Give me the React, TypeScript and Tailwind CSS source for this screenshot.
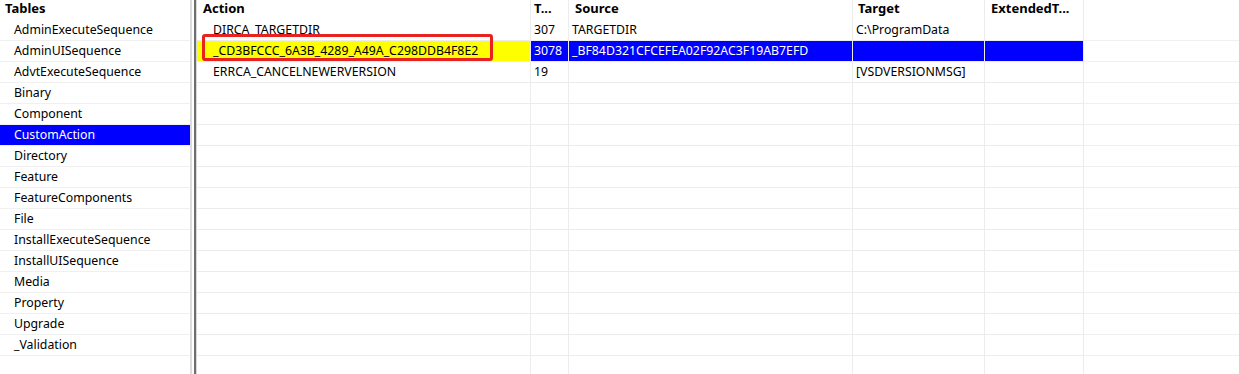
import React from "react";

const tables = [
  "AdminExecuteSequence",
  "AdminUISequence",
  "AdvtExecuteSequence",
  "Binary",
  "Component",
  "CustomAction",
  "Directory",
  "Feature",
  "FeatureComponents",
  "File",
  "InstallExecuteSequence",
  "InstallUISequence",
  "Media",
  "Property",
  "Upgrade",
  "_Validation"
];

interface Row {
  action: string;
  type: string;
  source: string;
  target: string;
  ext: string;
}

const rows: Row[] = [
  { action: "DIRCA_TARGETDIR", type: "307", source: "TARGETDIR", target: "C:\\ProgramData", ext: "" },
  {
    action: "_CD3BFCCC_6A3B_4289_A49A_C298DDB4F8E2",
    type: "3078",
    source: "_BF84D321CFCEFEA02F92AC3F19AB7EFD",
    target: "",
    ext: ""
  },
  { action: "ERRCA_CANCELNEWERVERSION", type: "19", source: "", target: "[VSDVERSIONMSG]", ext: "" }
];

const emptyRows = 13;

function TablesPanel() {
  return (
    <div className="flex w-[192px] shrink-0 flex-col border-r-2 border-[#dcdcdc]">
      <div className="h-[20px] pl-[5px] text-[13px] font-bold leading-[17px]">Tables</div>
      {tables.map((t) => {
        const selected = t === "CustomAction";
        return (
          <div
            key={t}
            className={
              selected
                ? "h-[21px] border-b border-[#f0f0f0] bg-[#0000ff] pl-[14px] leading-[20px] text-white"
                : "h-[21px] border-b border-[#f0f0f0] pl-[14px] leading-[20px]"
            }
          >
            {t}
          </div>
        );
      })}
    </div>
  );
}

function ActionTable() {
  return (
    <div className="flex min-w-0 flex-1 flex-col">
      {/* header */}
      <div className="flex h-[20px] text-[13px] font-bold leading-[17px]">
        <div className="w-[334px] shrink-0 border-r border-[#ececec] pl-[6px]">Action</div>
        <div className="w-[38px] shrink-0 border-r border-[#ececec] pl-[3px]">T...</div>
        <div className="w-[284px] shrink-0 border-r border-[#ececec] pl-[6px]">Source</div>
        <div className="w-[132px] shrink-0 border-r border-[#ececec] pl-[5px]">Target</div>
        <div className="w-[99px] shrink-0 border-r border-[#ececec] pl-[6px]">ExtendedT...</div>
        <div className="flex-1" />
      </div>

      {rows.map((r, i) => {
        const sel = i === 1;
        const cell = sel ? "bg-[#0000ff] text-white" : "";
        return (
          <div key={r.action} className="flex h-[21px] leading-[20px]">
            <div
              className={
                sel
                  ? "relative w-[334px] shrink-0 border-r border-b border-[#ececec] bg-[#ffff00] pl-[16px]"
                  : "w-[334px] shrink-0 border-r border-b border-[#ececec] pl-[16px]"
              }
            >
              {r.action}
              {sel && (
                <div className="absolute top-[-7px] left-[5px] h-[27px] w-[291px] rounded-[3px] border-[3px] border-[#e8231f]" />
              )}
            </div>
            <div className={`w-[38px] shrink-0 border-r border-b border-[#ececec] pl-[3px] ${cell}`}>{r.type}</div>
            <div className={`w-[284px] shrink-0 border-r border-b border-[#ececec] pl-[3px] ${cell}`}>{r.source}</div>
            <div className={`w-[132px] shrink-0 border-r border-b border-[#ececec] pl-[3px] ${cell}`}>{r.target}</div>
            <div className={`w-[99px] shrink-0 border-r border-b border-[#ececec] pl-[3px] ${cell}`}>{r.ext}</div>
            <div className="flex-1 border-b border-[#f0f0f0]" />
          </div>
        );
      })}

      {Array.from({ length: emptyRows }).map((_, i) => (
        <div key={i} className="flex h-[21px]">
          <div className="w-[334px] shrink-0 border-r border-b border-[#ececec]" />
          <div className="w-[38px] shrink-0 border-r border-b border-[#ececec]" />
          <div className="w-[284px] shrink-0 border-r border-b border-[#ececec]" />
          <div className="w-[132px] shrink-0 border-r border-b border-[#ececec]" />
          <div className="w-[99px] shrink-0 border-r border-b border-[#ececec]" />
          <div className="flex-1 border-b border-[#f0f0f0]" />
        </div>
      ))}

      {/* remaining space, column lines keep going */}
      <div className="flex flex-1">
        <div className="w-[334px] shrink-0 border-r border-[#ececec]" />
        <div className="w-[38px] shrink-0 border-r border-[#ececec]" />
        <div className="w-[284px] shrink-0 border-r border-[#ececec]" />
        <div className="w-[132px] shrink-0 border-r border-[#ececec]" />
        <div className="w-[99px] shrink-0 border-r border-[#ececec]" />
        <div className="flex-1" />
      </div>
    </div>
  );
}

export default function App() {
  return (
    <div
      className="flex h-[374px] w-[1239px] overflow-hidden bg-white text-[12.3px] text-black"
      style={{ fontFamily: '"Noto Sans", "Noto Sans CJK SC", sans-serif' }}
    >
      <TablesPanel />
      {/* splitter */}
      <div className="flex w-[5px] shrink-0">
        <div className="w-[2px] bg-white" />
        <div className="w-[2px] bg-[#6f6f6f]" />
        <div className="w-[1px] bg-[#d8d8d8]" />
      </div>
      <ActionTable />
    </div>
  );
}
